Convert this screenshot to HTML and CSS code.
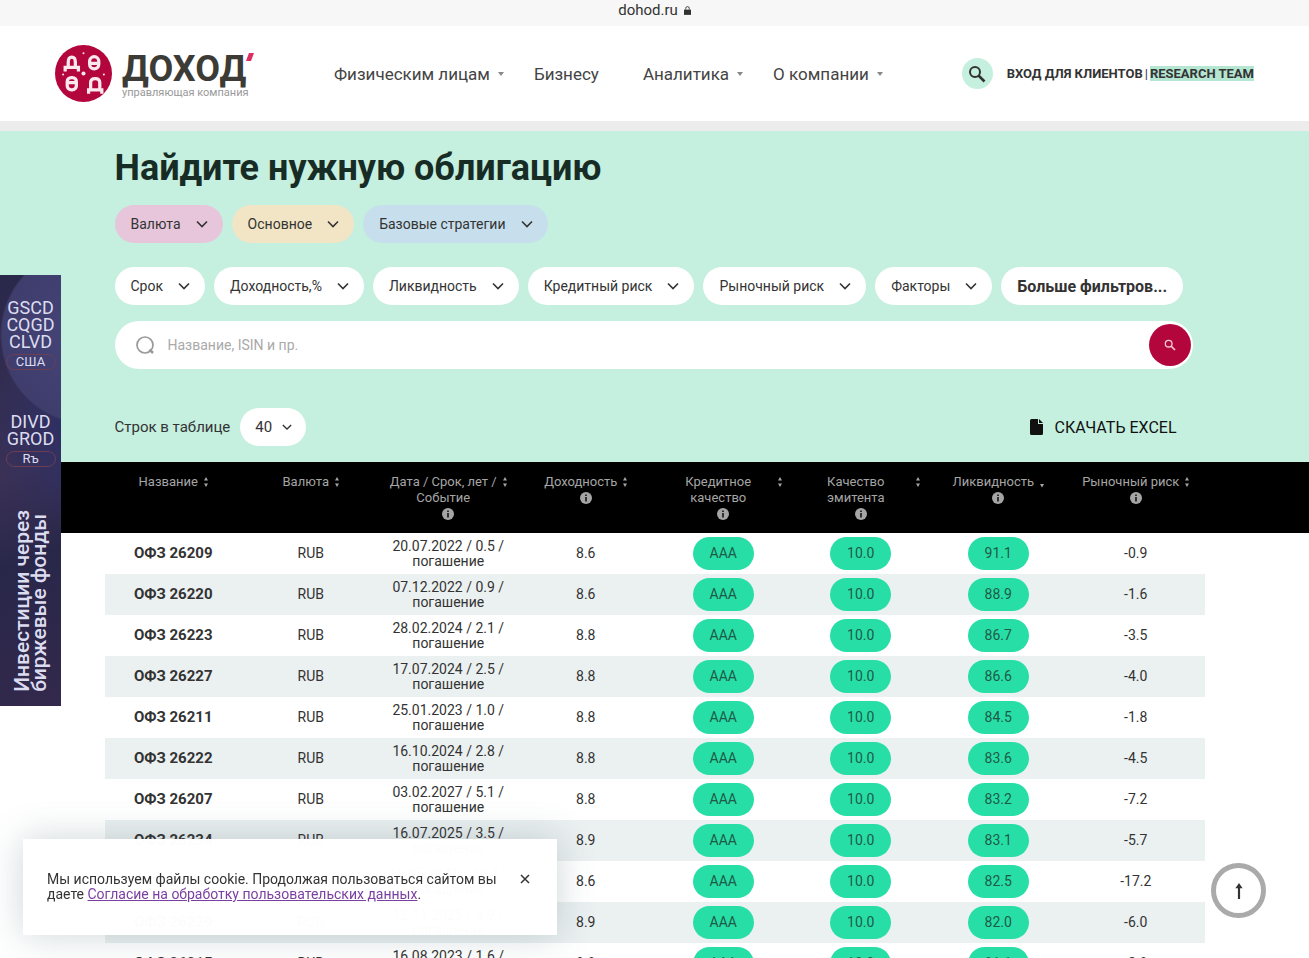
FILE: index.html
```html
<!DOCTYPE html>
<html lang="ru">
<head>
<meta charset="utf-8">
<meta name="viewport" content="width=device-width, initial-scale=1">
<title>Найдите нужную облигацию</title>
<link rel="stylesheet" href="styles.css">
</head>
<body>
<svg class="sprite" aria-hidden="true">
  <symbol id="chevron" viewBox="0 0 12 8"><path d="M1 1.5l5 5 5-5" fill="none" stroke="currentColor" stroke-width="1.6"/></symbol>
  <symbol id="caret" viewBox="0 0 6 6"><path d="M0 1h6L3 5z" fill="currentColor"/></symbol>
  <symbol id="lens" viewBox="0 0 18 18"><circle cx="7" cy="7" r="5" fill="none" stroke="currentColor" stroke-width="2"/><path d="M10.5 10.5L16.500 16.500" stroke="currentColor" stroke-width="2.600"/></symbol>
  <symbol id="lens-wide" viewBox="0 0 20 20"><circle cx="10" cy="10" r="8" fill="none" stroke="currentColor" stroke-width="1.700"/><path d="M14.500 14.500L18 18" stroke="currentColor" stroke-width="2.500"/></symbol>
  <symbol id="sort" viewBox="0 0 4 12"><path d="M0 4.500L2 1l2 3.500zM0 7.500L2 11l2-3.500z" fill="currentColor"/></symbol>
  <symbol id="sort-down" viewBox="0 0 4 12"><path d="M0 8L2 11.500 4 8z" fill="currentColor"/></symbol>
  <symbol id="info" viewBox="0 0 12 12"><circle cx="6" cy="6" r="6" fill="currentColor"/><path d="M6 2.500v1.500M6 5v4.500" stroke="#000" stroke-width="1.400"/></symbol>
</svg>

<div class="address">dohod.ru
  <svg class="lock" viewBox="0 0 8 10" aria-hidden="true"><path d="M2 4V2.500a2 2 0 0 1 4 0V4" fill="none" stroke="currentColor"/><path d="M0 4h8v6H0z" fill="currentColor"/></svg>
</div>

<header class="header">
  <a class="logo" href="#">
    <svg class="logo-mark" viewBox="0 0 56 56" aria-hidden="true">
      <circle cx="28" cy="28" r="28" fill="#b3063d"/>
      <g fill="none" stroke="#fbe8ef" stroke-width="3.200">
        <path d="M10 26v-4h13v4M13 22v-5q0-5 3.500-5T20 17v5"/>
        <rect x="34" y="11.500" width="9" height="12" rx="4.500"/>
        <rect x="12" y="32" width="9" height="12" rx="4"/>
        <path d="M33 48v-4h13v4M35 44v-7q0-4 4.500-4t4.500 4v7M13 37h7M35 18h7"/>
      </g>
      <g fill="#fbe8ef"><circle cx="28" cy="28" r="2"/><circle cx="28" cy="8" r="1"/><circle cx="8" cy="29" r="1"/><circle cx="48" cy="29" r="1"/></g>
    </svg>
    <span class="logo-words">
      <span class="logo-name">ДОХОД<svg class="logo-tick" viewBox="0 0 8 8" aria-hidden="true"><path d="M3 0h5L5 8H0z" fill="#dc2f62"/></svg></span>
      <span class="logo-sub">управляющая компания</span>
    </span>
  </a>
  <nav class="nav">
    <a class="nav-item has-menu" href="#">Физическим лицам<svg class="nav-caret"><use href="#caret"/></svg></a>
    <a class="nav-item" href="#">Бизнесу</a>
    <a class="nav-item has-menu" href="#">Аналитика<svg class="nav-caret"><use href="#caret"/></svg></a>
    <a class="nav-item has-menu" href="#">О компании<svg class="nav-caret"><use href="#caret"/></svg></a>
  </nav>
  <div class="account">
    <button class="round-search" type="button" aria-label="Поиск"><svg><use href="#lens"/></svg></button>
    <a href="#">ВХОД ДЛЯ КЛИЕНТОВ</a><span class="divider">|</span><a class="research" href="#">RESEARCH TEAM</a>
  </div>
</header>

<main>
  <section class="finder">
    <div class="container">
      <h1 class="title">Найдите нужную облигацию</h1>
      <div class="pills pills-main">
        <button class="pill pink" type="button">Валюта<svg><use href="#chevron"/></svg></button>
        <button class="pill sand" type="button">Основное<svg><use href="#chevron"/></svg></button>
        <button class="pill blue" type="button">Базовые стратегии<svg><use href="#chevron"/></svg></button>
      </div>
      <div class="pills">
        <button class="pill" type="button">Срок<svg><use href="#chevron"/></svg></button>
        <button class="pill" type="button">Доходность,%<svg><use href="#chevron"/></svg></button>
        <button class="pill" type="button">Ликвидность<svg><use href="#chevron"/></svg></button>
        <button class="pill" type="button">Кредитный риск<svg><use href="#chevron"/></svg></button>
        <button class="pill" type="button">Рыночный риск<svg><use href="#chevron"/></svg></button>
        <button class="pill" type="button">Факторы<svg><use href="#chevron"/></svg></button>
        <button class="pill more" type="button">Больше фильтров...</button>
      </div>
      <form class="search">
        <svg class="search-icon"><use href="#lens-wide"/></svg>
        <input class="search-input" type="text" placeholder="Название, ISIN и пр." aria-label="Название, ISIN и пр.">
        <button class="search-button" type="button" aria-label="Найти"><svg><use href="#lens"/></svg></button>
      </form>
      <div class="tools">
        <label for="rows">Строк в таблице</label>
        <span class="select-wrap"><select id="rows" class="rows"><option>40</option></select><svg><use href="#chevron"/></svg></span>
        <a class="excel" href="#"><svg viewBox="0 0 13 16" aria-hidden="true"><path d="M1.500 0H8v5h5v9.500a1.500 1.500 0 0 1-1.500 1.500h-10A1.500 1.500 0 0 1 0 14.500v-13A1.500 1.500 0 0 1 1.500 0zM9 0l4 4H9z" fill="currentColor"/></svg>СКАЧАТЬ EXCEL</a>
      </div>
    </div>
  </section>

  <table class="bonds">
    <thead>
      <tr>
        <th><div class="head"><span>Название</span><svg class="sort"><use href="#sort"/></svg></div></th>
        <th><div class="head"><span>Валюта</span><svg class="sort"><use href="#sort"/></svg></div></th>
        <th><div class="head"><span class="grow">Дата / Срок, лет /<br>Событие</span><svg class="sort"><use href="#sort"/></svg></div><svg class="info"><use href="#info"/></svg></th>
        <th><div class="head"><span>Доходность</span><svg class="sort"><use href="#sort"/></svg></div><svg class="info"><use href="#info"/></svg></th>
        <th><div class="head"><span class="grow">Кредитное<br>качество</span><svg class="sort"><use href="#sort"/></svg></div><svg class="info"><use href="#info"/></svg></th>
        <th><div class="head"><span class="grow">Качество<br>эмитента</span><svg class="sort"><use href="#sort"/></svg></div><svg class="info"><use href="#info"/></svg></th>
        <th><div class="head"><span>Ликвидность</span><svg class="sort"><use href="#sort-down"/></svg></div><svg class="info"><use href="#info"/></svg></th>
        <th><div class="head"><span>Рыночный риск</span><svg class="sort"><use href="#sort"/></svg></div><svg class="info"><use href="#info"/></svg></th>
      </tr>
    </thead>
    <tbody>
      <tr><td class="name">ОФЗ 26209</td><td>RUB</td><td>20.07.2022 / 0.5 /<br>погашение</td><td>8.6</td><td><span class="badge">AAA</span></td><td><span class="badge">10.0</span></td><td><span class="badge">91.1</span></td><td>-0.9</td></tr>
      <tr><td class="name">ОФЗ 26220</td><td>RUB</td><td>07.12.2022 / 0.9 /<br>погашение</td><td>8.6</td><td><span class="badge">AAA</span></td><td><span class="badge">10.0</span></td><td><span class="badge">88.9</span></td><td>-1.6</td></tr>
      <tr><td class="name">ОФЗ 26223</td><td>RUB</td><td>28.02.2024 / 2.1 /<br>погашение</td><td>8.8</td><td><span class="badge">AAA</span></td><td><span class="badge">10.0</span></td><td><span class="badge">86.7</span></td><td>-3.5</td></tr>
      <tr><td class="name">ОФЗ 26227</td><td>RUB</td><td>17.07.2024 / 2.5 /<br>погашение</td><td>8.8</td><td><span class="badge">AAA</span></td><td><span class="badge">10.0</span></td><td><span class="badge">86.6</span></td><td>-4.0</td></tr>
      <tr><td class="name">ОФЗ 26211</td><td>RUB</td><td>25.01.2023 / 1.0 /<br>погашение</td><td>8.8</td><td><span class="badge">AAA</span></td><td><span class="badge">10.0</span></td><td><span class="badge">84.5</span></td><td>-1.8</td></tr>
      <tr><td class="name">ОФЗ 26222</td><td>RUB</td><td>16.10.2024 / 2.8 /<br>погашение</td><td>8.8</td><td><span class="badge">AAA</span></td><td><span class="badge">10.0</span></td><td><span class="badge">83.6</span></td><td>-4.5</td></tr>
      <tr><td class="name">ОФЗ 26207</td><td>RUB</td><td>03.02.2027 / 5.1 /<br>погашение</td><td>8.8</td><td><span class="badge">AAA</span></td><td><span class="badge">10.0</span></td><td><span class="badge">83.2</span></td><td>-7.2</td></tr>
      <tr><td class="name">ОФЗ 26234</td><td>RUB</td><td>16.07.2025 / 3.5 /<br>погашение</td><td>8.9</td><td><span class="badge">AAA</span></td><td><span class="badge">10.0</span></td><td><span class="badge">83.1</span></td><td>-5.7</td></tr>
      <tr><td class="name">ОФЗ 26238</td><td>RUB</td><td>15.05.2041 / 19.4 /<br>погашение</td><td>8.6</td><td><span class="badge">AAA</span></td><td><span class="badge">10.0</span></td><td><span class="badge">82.5</span></td><td>-17.2</td></tr>
      <tr><td class="name">ОФЗ 26229</td><td>RUB</td><td>12.11.2025 / 3.9 /<br>погашение</td><td>8.9</td><td><span class="badge">AAA</span></td><td><span class="badge">10.0</span></td><td><span class="badge">82.0</span></td><td>-6.0</td></tr>
      <tr><td class="name">ОФЗ 26215</td><td>RUB</td><td>16.08.2023 / 1.6 /<br>погашение</td><td>8.8</td><td><span class="badge">AAA</span></td><td><span class="badge">10.0</span></td><td><span class="badge">81.1</span></td><td>-2.8</td></tr>
    </tbody>
  </table>
</main>

<a class="promo" href="#">
  <span class="funds">GSCD<br>CQGD<br>CLVD</span>
  <span class="tag">США</span>
  <span class="funds second">DIVD<br>GROD</span>
  <span class="tag">Rъ</span>
  <span class="slogan">Инвестиции через<br>биржевые фонды</span>
</a>

<aside class="cookie">
  <p>Мы используем файлы cookie. Продолжая пользоваться сайтом вы даете <a href="#">Согласие на обработку пользовательских данных</a>.</p>
  <button type="button" aria-label="Закрыть"><svg viewBox="0 0 10 10"><path d="M1 1l8 8M9 1L1 9" stroke="currentColor" stroke-width="1.500"/></svg></button>
</aside>

<button class="to-top" type="button" aria-label="Наверх"><svg viewBox="0 0 10 20"><path d="M5 1l4 6H6.200v12H3.800V7H1z" fill="currentColor"/></svg></button>
</body>
</html>
```

FILE: styles.css
```css
* { box-sizing: border-box; }

body {
  margin: 0;
  height: 100vh;
  overflow: hidden;
  background: #fff;
  color: #333;
  font-family: Roboto, "Liberation Sans", sans-serif;
  font-size: 14px;
}

a { color: inherit; text-decoration: none; }
button, input, select { font: inherit; color: inherit; border: 0; padding: 0; }
svg { flex: none; }
.sprite { display: none; }

.address {
  display: flex;
  align-items: center;
  justify-content: center;
  gap: 6px;
  height: 26px;
  padding-bottom: 6px;
  background: #f7f7f7;
  font-size: 15px;
}
.lock { width: 7px; height: 9px; }

.header {
  display: flex;
  align-items: center;
  height: 105px;
  padding: 0 55px;
  border-bottom: 10px solid #ececec;
}
.logo { display: flex; align-items: center; gap: 10px; width: 279px; }
.logo-mark { width: 57px; height: 57px; }
.logo-words { display: flex; flex-direction: column; padding-top: 2px; }
.logo-name {
  display: flex;
  color: #3c3b35;
  font-size: 36px;
  font-weight: 700;
  line-height: 36px;
}
.logo-tick { width: 8px; height: 8px; margin-top: 2px; }
.logo-sub { color: #999; font-size: 11px; line-height: 12px; }

.nav { display: flex; gap: 44px; color: #444; font-size: 17px; }
.nav-item { white-space: nowrap; }
.has-menu { display: flex; align-items: center; gap: 8px; margin-right: -14px; }
.nav-caret { width: 6px; height: 6px; color: #888; }

.account {
  display: flex;
  align-items: center;
  margin-left: auto;
  font-size: 13px;
  font-weight: 700;
  white-space: nowrap;
}
.round-search {
  display: grid;
  place-items: center;
  width: 31px;
  height: 31px;
  margin-right: 14px;
  border-radius: 50%;
  background: #c5efdf;
}
.round-search svg { width: 18px; height: 18px; }
.divider { padding: 0 2px; font-weight: 400; }
.research { background: #b4e6d2; }

.finder { background: #c5efdf; }
.container { max-width: 1100px; margin: 0 auto; padding: 16px 10px; }
.title { margin: 0 0 16px; color: #182c26; font-size: 36px; line-height: 42px; }

.pills { display: flex; gap: 9px; margin-bottom: 16px; }
.pills-main { margin-bottom: 24px; }
.pill {
  display: flex;
  align-items: center;
  gap: 15px;
  height: 38px;
  padding: 0 15px 0 16px;
  border-radius: 19px;
  background: #fff;
  font-size: 14px;
  white-space: nowrap;
}
.pill svg { width: 12px; height: 8px; }
.pill.more { padding: 0 16px; font-size: 16px; font-weight: 700; }
.pill.pink { background: #e7c6dc; }
.pill.sand { background: #f1e5c5; }
.pill.blue { background: #c7deec; }

.search {
  display: flex;
  align-items: center;
  height: 48px;
  padding: 0 2px 0 20px;
  margin-right: 2px;
  border-radius: 24px;
  background: #fff;
}
.search-icon { width: 20px; height: 20px; margin-right: 13px; color: #999; }
.search-input { flex: 1; min-width: 0; background: none; font-size: 14px; }
.search-input::placeholder { color: #a9a9a9; opacity: 1; }
.search-button {
  display: grid;
  place-items: center;
  width: 42px;
  height: 42px;
  border-radius: 50%;
  background: #b3063d;
  color: #f3cad8;
}
.search-button svg { width: 12px; height: 12px; }

.tools { display: flex; align-items: center; gap: 10px; margin-top: 39px; font-size: 15px; }
.select-wrap { display: grid; align-items: center; }
.select-wrap > * { grid-area: 1 / 1; }
.select-wrap svg { width: 10px; height: 8px; margin-right: 14px; justify-self: end; pointer-events: none; }
.rows {
  width: 66px;
  height: 38px;
  padding-left: 15px;
  border-radius: 19px;
  background: #fff;
  appearance: none;
}
.excel { display: flex; align-items: center; gap: 12px; margin: 0 18px 0 auto; color: #111; font-size: 16px; }
.excel svg { width: 13px; height: 16px; }

.bonds {
  width: 100%;
  max-width: 1100px;
  margin: 0 auto;
  border-collapse: collapse;
  table-layout: fixed;
  text-align: center;
}
.bonds thead {
  background: #000;
  color: #a5a5a5;
  box-shadow: 0 0 0 100vmax #000;
  clip-path: inset(0 -100vmax);
}
.bonds th { height: 71px; padding: 12px 10px 0; vertical-align: top; font-size: 13px; font-weight: 400; line-height: 16px; }
.head { display: flex; justify-content: center; gap: 6px; white-space: nowrap; }
.grow { flex: 1; }
.sort { width: 4px; height: 12px; margin-top: 2px; }
.info { display: block; width: 12px; height: 12px; margin: 2px auto; }
.bonds td { height: 41px; padding: 0; font-size: 14px; line-height: 15px; }
.bonds tbody tr:nth-child(even) { background: #ebf0f1; }
.bonds .name { font-size: 15px; font-weight: 700; }
.badge {
  display: block;
  width: 61px;
  margin: 0 auto;
  border-radius: 17px;
  background: #27dfa6;
  color: #1f5a48;
  line-height: 33px;
}

.promo {
  position: fixed;
  top: 275px;
  left: 0;
  display: flex;
  flex-direction: column;
  align-items: center;
  width: 61px;
  height: 431px;
  padding: 24px 4px 14px;
  background:
    radial-gradient(circle at 90px 60px, #45457a 0, #3f3d6c 88px, transparent 90px),
    radial-gradient(circle at 100px 150px, #29306b 0, transparent 110px),
    linear-gradient(160deg, #29284a, #3b3156 45%, #28274a 65%, #33294c);
  color: #dcdcf0;
}
.funds { font-size: 18px; line-height: 17px; text-align: center; }
.second { margin-top: 43px; }
.tag {
  width: 50px;
  margin-top: 4px;
  border: 1px solid #6c3d55;
  border-radius: 8px;
  font-size: 13px;
  line-height: 14px;
  text-align: center;
}
.slogan {
  margin-top: auto;
  writing-mode: vertical-rl;
  transform: rotate(180deg);
  font-size: 21px;
  font-weight: 500;
  line-height: 17px;
  white-space: nowrap;
}

.cookie {
  position: fixed;
  left: 23px;
  bottom: 23px;
  display: flex;
  align-items: flex-start;
  gap: 14px;
  width: 534px;
  height: 96px;
  padding: 33px 26px 0 24px;
  background: rgba(255, 255, 255, 0.99);
  box-shadow: 0 0 36px rgba(60, 90, 100, 0.25);
  font-size: 14px;
  line-height: 15px;
}
.cookie p { flex: 1; margin: 0; }
.cookie a { color: #7a3fa0; text-decoration: underline; }
.cookie button { width: 12px; height: 15px; background: none; }
.cookie button svg { width: 10px; height: 10px; }

.to-top {
  position: fixed;
  right: 43px;
  bottom: 40px;
  display: grid;
  place-items: center;
  width: 55px;
  height: 55px;
  border: 5px solid #aaa;
  border-radius: 50%;
  background: #fff;
}
.to-top svg { width: 10px; height: 18px; }
```
